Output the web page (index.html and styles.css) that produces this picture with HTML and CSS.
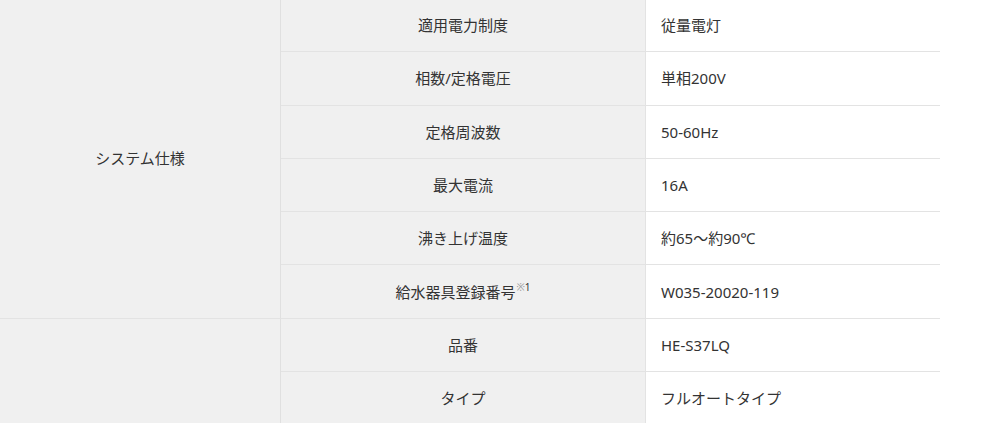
FILE: index.html
```html
<!DOCTYPE html>
<html lang="ja">
<head>
<meta charset="utf-8">
<link rel="stylesheet" href="styles.css">
</head>
<body>
<table class="spec">
  <colgroup>
    <col class="c-sec">
    <col class="c-key">
    <col class="c-val">
  </colgroup>
  <tbody>
    <tr>
      <th class="sec" rowspan="6">システム仕様</th>
      <th class="key">適用電力制度</th>
      <td class="val">従量電灯</td>
    </tr>
    <tr><th class="key">相数/定格電圧</th><td class="val">単相200V</td></tr>
    <tr><th class="key">定格周波数</th><td class="val">50-60Hz</td></tr>
    <tr><th class="key">最大電流</th><td class="val">16A</td></tr>
    <tr><th class="key">沸き上げ温度</th><td class="val">約65～約90℃</td></tr>
    <tr><th class="key">給水器具登録番号<sup class="note"><span class="mark">※</span>1</sup></th><td class="val">W035-20020-119</td></tr>
    <tr>
      <th class="sec" rowspan="3"></th>
      <th class="key">品番</th>
      <td class="val">HE-S37LQ</td>
    </tr>
    <tr><th class="key">タイプ</th><td class="val">フルオートタイプ</td></tr>
    <tr><th class="key">&nbsp;</th><td class="val">&nbsp;</td></tr>
  </tbody>
</table>
</body>
</html>
```

FILE: styles.css
```css
html, body {
  margin: 0;
  padding: 0;
  background: #ffffff;
  overflow: hidden;
}

body {
  font-family: "Noto Sans", "Noto Sans CJK JP", sans-serif;
  font-size: 15px;
  color: #333333;
}

.spec {
  width: 940px;
  margin-top: -1px;
  border-collapse: separate;
  border-spacing: 0;
  table-layout: fixed;
}

.c-sec { width: 281px; }
.c-key { width: 365px; }
.c-val { width: 294px; }

.spec th,
.spec td {
  height: 52.3px;
  padding: 0;
  font-weight: 400;
  border-bottom: 1px solid #e3e3e3;
  vertical-align: middle;
  line-height: 20px;
}

.sec {
  background: #f0f0f0;
  border-right: 1px solid #e0e0e0;
  text-align: center;
}

.key {
  background: #f0f0f0;
  border-right: 1px solid #e3e3e3;
  text-align: center;
}

.val {
  background: #ffffff;
  text-align: left;
  padding-left: 15px !important;
}

.note {
  font-size: 10px;
  line-height: 0;
  vertical-align: 7px;
  margin-left: 1px;
  color: #333333;
}

.mark {
  color: #9a9a9a;
}
```
